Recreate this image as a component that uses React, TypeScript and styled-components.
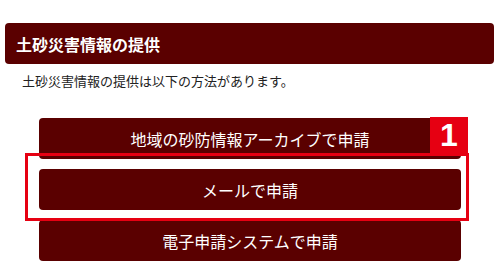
import React from 'react'
import styled, { createGlobalStyle } from 'styled-components'

const GlobalStyle = createGlobalStyle`
  body {
    margin: 0;
    background: #ffffff;
    font-family: 'Noto Sans CJK JP', 'Noto Sans', sans-serif;
  }
`

const Page = styled.div`
  width: 500px;
  height: 280px;
  padding: 23px 6px 0 5px;
  box-sizing: border-box;
  overflow: hidden;
`

const SectionHeader = styled.h2`
  margin: 0;
  height: 41px;
  display: flex;
  align-items: center;
  padding-left: 11px;
  background: #5a0000;
  border-radius: 4px;
  color: #ffffff;
  font-size: 16px;
  font-weight: bold;
`

const Lead = styled.p`
  margin: 7px 0 0;
  padding-left: 17px;
  font-size: 13px;
  line-height: 20px;
  color: #222222;
`

const ButtonList = styled.div`
  position: relative;
  width: 422px;
  margin: 27px 0 0 34px;
  display: flex;
  flex-direction: column;
  gap: 10px;
`

const ApplyButton = styled.a`
  height: 41px;
  display: flex;
  align-items: center;
  justify-content: center;
  background: #5a0000;
  border-radius: 4px;
  color: #ffffff;
  font-size: 16px;
  text-decoration: none;
`

const HighlightFrame = styled.div`
  position: absolute;
  left: -14px;
  top: 35px;
  width: 444px;
  height: 68px;
  border: 3px solid #e60012;
  box-sizing: border-box;
  pointer-events: none;
`

const StepBadge = styled.span`
  position: absolute;
  right: -2px;
  top: -39px;
  width: 38px;
  height: 36px;
  display: flex;
  align-items: center;
  justify-content: center;
  background: #e60012;
  color: #ffffff;
  font-family: 'Liberation Sans', Arial, sans-serif;
  font-size: 32px;
  font-weight: bold;
  line-height: 1;
`

const methods = ['地域の砂防情報アーカイブで申請', 'メールで申請', '電子申請システムで申請']

export default function App() {
  return (
    <>
      <GlobalStyle />
      <Page>
        <SectionHeader>土砂災害情報の提供</SectionHeader>
        <Lead>土砂災害情報の提供は以下の方法があります。</Lead>
        <ButtonList>
          {methods.map((label) => (
            <ApplyButton key={label}>{label}</ApplyButton>
          ))}
          <HighlightFrame>
            <StepBadge>1</StepBadge>
          </HighlightFrame>
        </ButtonList>
      </Page>
    </>
  )
}
